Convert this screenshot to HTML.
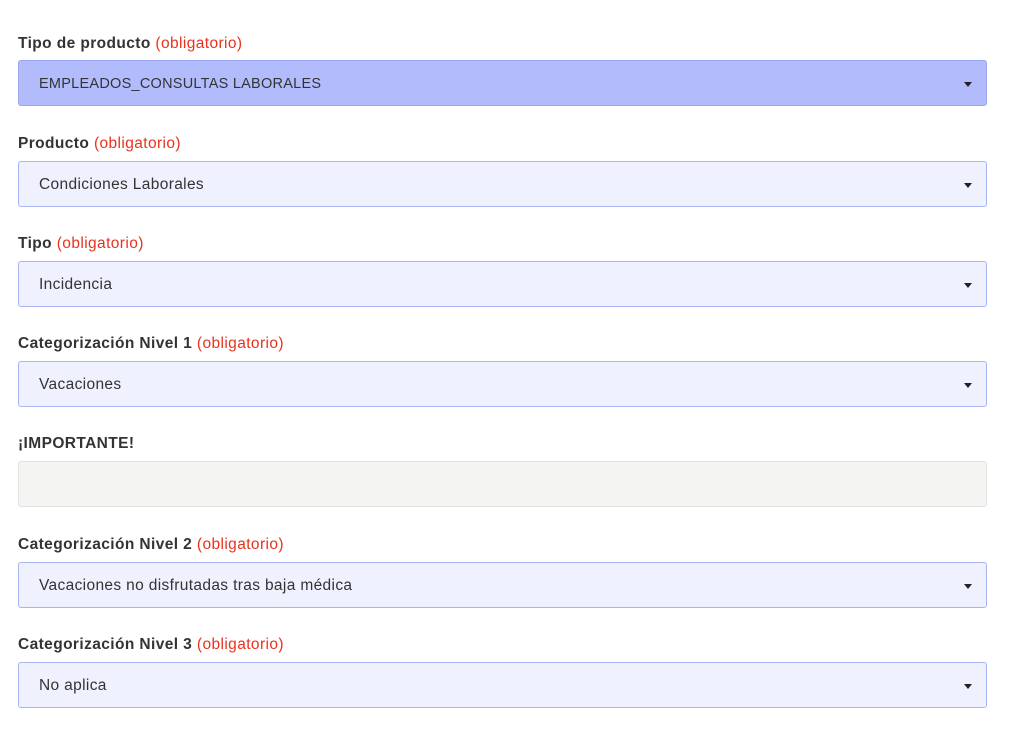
<!DOCTYPE html>
<html><head><meta charset="utf-8"><style>
body{margin:0;background:#fff;font-family:"Liberation Sans",sans-serif;width:1009px;height:732px;overflow:hidden;position:relative}
.l{position:absolute;left:18px;font-size:15.5px;letter-spacing:0.4px;font-weight:bold;color:#333}
.l span{color:#e8321e;font-weight:normal}
.b{position:absolute;left:18px;width:967px;height:44px;border:1px solid #a9b4f5;border-radius:3px;background:#eff1fe;font-size:15.5px;letter-spacing:0.35px;color:#333;box-sizing:content-box}
.b div{position:absolute;left:20px;top:14px}
.b i{position:absolute;right:14px;top:21px;width:0;height:0;border-left:4px solid transparent;border-right:4px solid transparent;border-top:5px solid #222}
.sel{background:#b2bcfd;border-color:#9aa6f2;font-size:14.5px;letter-spacing:0.25px}
.sel div{top:15px}
.g{background:#f4f4f3;border-color:#e2e2e2}
</style></head><body>
<div class="l" style="top:35px">Tipo de producto <span>(obligatorio)</span></div>
<div class="b sel" style="top:60px"><div>EMPLEADOS_CONSULTAS LABORALES</div><i></i></div>
<div class="l" style="top:135px">Producto <span>(obligatorio)</span></div>
<div class="b" style="top:161px"><div>Condiciones Laborales</div><i></i></div>
<div class="l" style="top:235px">Tipo <span>(obligatorio)</span></div>
<div class="b" style="top:261px"><div>Incidencia</div><i></i></div>
<div class="l" style="top:335px">Categorización Nivel 1 <span>(obligatorio)</span></div>
<div class="b" style="top:361px"><div>Vacaciones</div><i></i></div>
<div class="l" style="top:435px">¡IMPORTANTE!</div>
<div class="b g" style="top:461px"></div>
<div class="l" style="top:536px">Categorización Nivel 2 <span>(obligatorio)</span></div>
<div class="b" style="top:562px"><div>Vacaciones no disfrutadas tras baja médica</div><i></i></div>
<div class="l" style="top:636px">Categorización Nivel 3 <span>(obligatorio)</span></div>
<div class="b" style="top:662px"><div>No aplica</div><i></i></div>
</body></html>
